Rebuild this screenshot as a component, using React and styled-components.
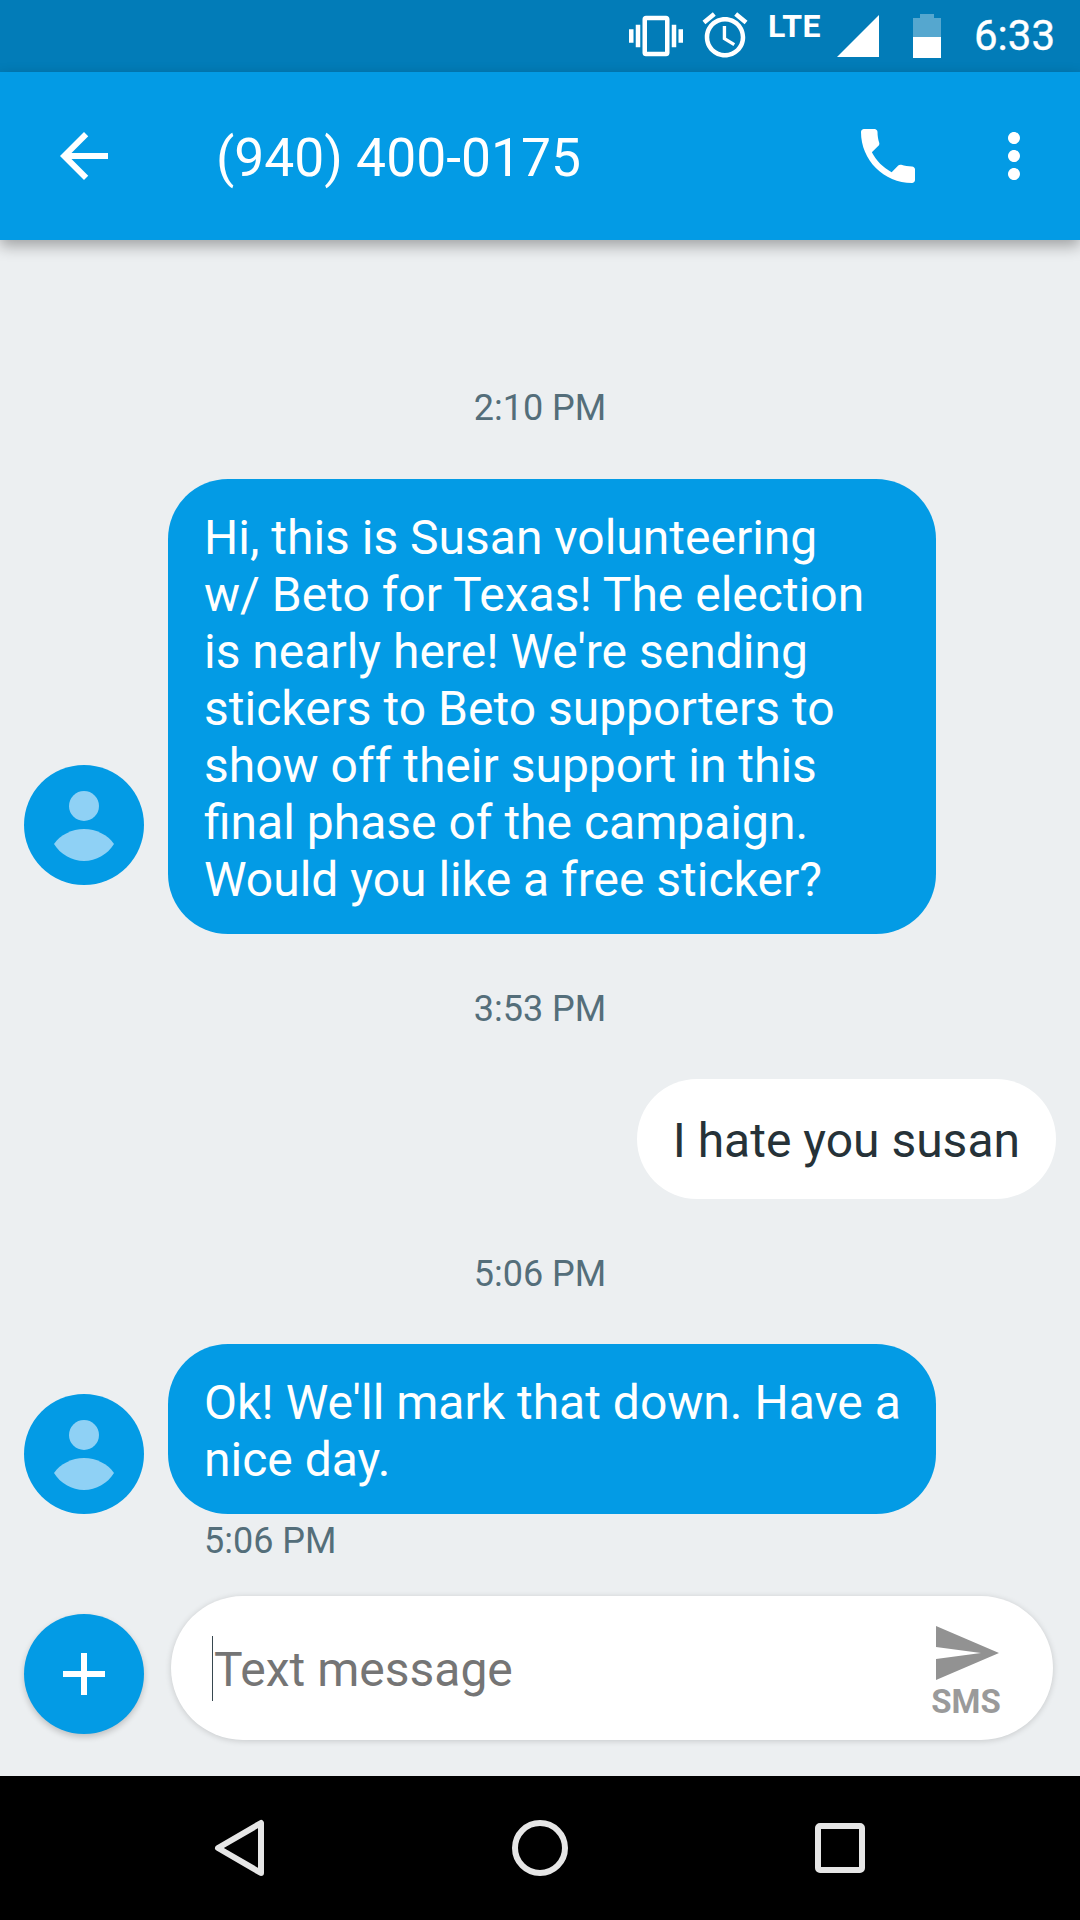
import styled, { createGlobalStyle } from 'styled-components';

const GlobalStyle = createGlobalStyle`
  html, body {
    margin: 0;
    padding: 0;
    background: #eceff1;
  }
  * {
    box-sizing: border-box;
  }
`;

const Screen = styled.div`
  display: flex;
  flex-direction: column;
  width: 1080px;
  height: 1920px;
  overflow: hidden;
  font-family: Roboto, 'Liberation Sans', sans-serif;
  background: #eceff1;
`;

const StatusBar = styled.div`
  display: flex;
  align-items: center;
  justify-content: flex-end;
  flex: 0 0 72px;
  padding-right: 25px;
  background: #027cb8;
  color: #fff;
`;

const StatusIcon = styled.svg`
  display: block;
  flex: none;
  margin-left: ${(p) => p.$left || 0}px;
  margin-top: ${(p) => p.$up || 0}px;
  fill: #fff;
`;

const Lte = styled.span`
  align-self: flex-start;
  margin: 10px 0 0 16px;
  font-size: 32px;
  font-weight: 700;
  letter-spacing: 0.5px;
  line-height: 32px;
`;

const Clock = styled.span`
  margin-left: 33px;
  font-size: 42px;
  line-height: 72px;
  -webkit-text-stroke: 0.4px #fff;
`;

const AppBar = styled.header`
  position: relative;
  z-index: 1;
  display: flex;
  align-items: center;
  flex: 0 0 168px;
  padding: 0 30px 0 48px;
  background: #039be5;
  box-shadow: 0 6px 14px rgba(0, 0, 0, 0.32);
`;

const BarIcon = styled.svg`
  display: block;
  flex: none;
  margin-left: ${(p) => p.$left || 0}px;
  fill: #fff;
`;

const Title = styled.h1`
  flex: 1;
  margin: 4px 0 0 96px;
  color: #fff;
  font-size: 53.4px;
  font-weight: 400;
  line-height: 72px;
`;

const Thread = styled.main`
  flex: 1;
  padding-top: 147px;
`;

const Stamp = styled.div`
  margin: ${(p) => p.$top || 0}px 0 0 ${(p) => p.$left || 0}px;
  color: #546e7a;
  font-size: 36px;
  line-height: 42px;
  text-align: ${(p) => (p.$left ? 'left' : 'center')};
`;

const Row = styled.div`
  display: flex;
  align-items: flex-end;
  justify-content: ${(p) => (p.$out ? 'flex-end' : 'flex-start')};
  gap: 24px;
  margin-top: ${(p) => p.$top || 50}px;
  padding: 0 24px;
`;

const Avatar = styled.svg`
  display: block;
  flex: none;
  margin-bottom: ${(p) => p.$lift || 0}px;
`;

const Bubble = styled.div`
  width: ${(p) => (p.$out ? 'auto' : '768px')};
  padding: ${(p) => (p.$out ? '33px 36px 30px' : '30px 36px 26px')};
  border-radius: 60px;
  background: ${(p) => (p.$out ? '#fff' : '#039be5')};
  color: ${(p) => (p.$out ? '#263238' : '#fff')};
  font-size: 48px;
  line-height: 57px;
  white-space: nowrap;
`;

const ComposeBar = styled.div`
  display: flex;
  align-items: flex-end;
  gap: 27px;
  padding: 0 27px 36px 24px;
`;

const Fab = styled.button`
  display: flex;
  align-items: center;
  justify-content: center;
  flex: none;
  width: 120px;
  height: 120px;
  margin-bottom: 6px;
  padding: 0;
  border: 0;
  border-radius: 50%;
  background: #039be5;
  box-shadow: 0 3px 6px rgba(0, 0, 0, 0.2);
`;

const Field = styled.div`
  display: flex;
  align-items: center;
  flex: 1;
  height: 144px;
  padding: 0 51px 0 41px;
  border-radius: 72px;
  background: #fff;
  box-shadow: 0 1px 6px rgba(0, 0, 0, 0.16);
`;

const Caret = styled.span`
  flex: none;
  width: 1px;
  height: 65px;
  background: #37474f;
`;

const Placeholder = styled.span`
  flex: 1;
  padding: 2px 0 0 1px;
  color: #757575;
  font-size: 48px;
  line-height: 65px;
`;

const Send = styled.div`
  display: flex;
  flex-direction: column;
  align-items: center;
  flex: none;
  width: 72px;
`;

const SendLabel = styled.span`
  margin-top: -5px;
  color: #9a9a9a;
  font-size: 33px;
  font-weight: 700;
  line-height: 36px;
`;

const NavBar = styled.nav`
  display: flex;
  align-items: center;
  justify-content: center;
  gap: 228px;
  flex: 0 0 144px;
  background: #000;
`;

const NavIcon = styled.svg`
  display: block;
  fill: none;
  stroke: #e6e6e6;
  stroke-width: 6;
  stroke-linejoin: round;
`;

const Vibrate = () => (
  <StatusIcon width='54' height='54' viewBox='0 0 24 24'>
    <path d='M0 15h2V9H0v6zm3 2h2V7H3v10zm19-8v6h2V9h-2zm-3 8h2V7h-2v10zM16.5 3h-9C6.67 3 6 3.67 6 4.5v15c0 .83.67 1.5 1.5 1.5h9c.83 0 1.5-.67 1.5-1.5v-15c0-.83-.67-1.5-1.5-1.5zM16 19H8V5h8v14z' />
  </StatusIcon>
);

const Alarm = () => (
  <StatusIcon $left={15} $up={-2} width='54' height='54' viewBox='0 0 24 24'>
    <path d='M22 5.72l-4.6-3.86-1.29 1.53 4.6 3.86L22 5.72zM7.88 3.39L6.6 1.86 2 5.71l1.29 1.53 4.59-3.85zM12.5 8H11v6l4.75 2.85.75-1.23-4-2.37V8zM12 4c-4.97 0-9 4.03-9 9s4.02 9 9 9c4.97 0 9-4.03 9-9s-4.03-9-9-9zm0 16c-3.87 0-7-3.13-7-7s3.13-7 7-7 7 3.13 7 7-3.13 7-7 7z' />
  </StatusIcon>
);

const Signal = () => (
  <StatusIcon $left={16} width='42' height='42' viewBox='0 0 42 42'>
    <path d='M42 0v42H0z' />
  </StatusIcon>
);

const Battery = () => (
  <StatusIcon $left={34} width='28' height='44' viewBox='0 0 28 44'>
    <path opacity='.33' d='M7 0h14v4h7v19H0V4h7z' />
    <path d='M0 23h28v21H0z' />
  </StatusIcon>
);

const Contact = ({ lift }) => (
  <Avatar $lift={lift} width='120' height='120' viewBox='0 0 120 120'>
    <circle cx='60' cy='60' r='60' fill='#039be5' />
    <circle cx='60' cy='41' r='15' fill='#8fd1f5' />
    <path
      fill='#8fd1f5'
      d='M30 79C36 70 48 64 60 64s24 6 30 15c-6 10-18 17-30 17s-24-7-30-17z'
    />
  </Avatar>
);

function App() {
  return (
    <Screen>
      <GlobalStyle />
      <StatusBar>
        <Vibrate />
        <Alarm />
        <Lte>LTE</Lte>
        <Signal />
        <Battery />
        <Clock>6:33</Clock>
      </StatusBar>
      <AppBar>
        <BarIcon width='72' height='72' viewBox='0 0 24 24'>
          <path d='M20 11H7.83l5.59-5.59L12 4l-8 8 8 8 1.41-1.41L7.83 13H20v-2z' />
        </BarIcon>
        <Title>(940) 400-0175</Title>
        <BarIcon width='72' height='72' viewBox='0 0 24 24'>
          <path d='M6.62 10.79c1.44 2.83 3.76 5.14 6.59 6.59l2.2-2.2c.27-.27.67-.36 1.02-.24 1.12.37 2.33.57 3.57.57.55 0 1 .45 1 1V20c0 .55-.45 1-1 1-9.39 0-17-7.61-17-17 0-.55.45-1 1-1h3.5c.55 0 1 .45 1 1 0 1.25.2 2.45.57 3.57.11.35.03.74-.25 1.02l-2.2 2.2z' />
        </BarIcon>
        <BarIcon $left={54} width='72' height='72' viewBox='0 0 24 24'>
          <path d='M12 8c1.1 0 2-.9 2-2s-.9-2-2-2-2 .9-2 2 .9 2 2 2zm0 2c-1.1 0-2 .9-2 2s.9 2 2 2 2-.9 2-2-.9-2-2-2zm0 6c-1.1 0-2 .9-2 2s.9 2 2 2 2-.9 2-2-.9-2-2-2z' />
        </BarIcon>
      </AppBar>
      <Thread>
        <Stamp>2:10 PM</Stamp>
        <Row>
          <Contact lift={49} />
          <Bubble>
            Hi, this is Susan volunteering
            <br />
            w/ Beto for Texas! The election
            <br />
            is nearly here! We're sending
            <br />
            stickers to Beto supporters to
            <br />
            show off their support in this
            <br />
            final phase of the campaign.
            <br />
            Would you like a free sticker?
          </Bubble>
        </Row>
        <Stamp $top={54}>3:53 PM</Stamp>
        <Row $out $top={49}>
          <Bubble $out>I hate you susan</Bubble>
        </Row>
        <Stamp $top={54}>5:06 PM</Stamp>
        <Row $top={49}>
          <Contact />
          <Bubble>
            Ok! We'll mark that down. Have a
            <br />
            nice day.
          </Bubble>
        </Row>
        <Stamp $left={204} $top={6}>
          5:06 PM
        </Stamp>
      </Thread>
      <ComposeBar>
        <Fab aria-label='Attach'>
          <BarIcon width='72' height='72' viewBox='0 0 24 24'>
            <path d='M19 13h-6v6h-2v-6H5v-2h6V5h2v6h6v2z' />
          </BarIcon>
        </Fab>
        <Field>
          <Caret />
          <Placeholder>Text message</Placeholder>
          <Send>
            <svg width='72' height='72' viewBox='0 0 24 24' fill='#929292'>
              <path d='M2.01 21L23 12 2.01 3 2 10l15 2-15 2z' />
            </svg>
            <SendLabel>SMS</SendLabel>
          </Send>
        </Field>
      </ComposeBar>
      <NavBar>
        <NavIcon width='72' height='72' viewBox='0 0 72 72'>
          <path d='M57 11v50L14 36z' />
        </NavIcon>
        <NavIcon width='72' height='72' viewBox='0 0 72 72'>
          <circle cx='36' cy='36' r='25' />
        </NavIcon>
        <NavIcon width='72' height='72' viewBox='0 0 72 72'>
          <rect x='14' y='14' width='44' height='44' rx='2' />
        </NavIcon>
      </NavBar>
    </Screen>
  );
}

export default App;
